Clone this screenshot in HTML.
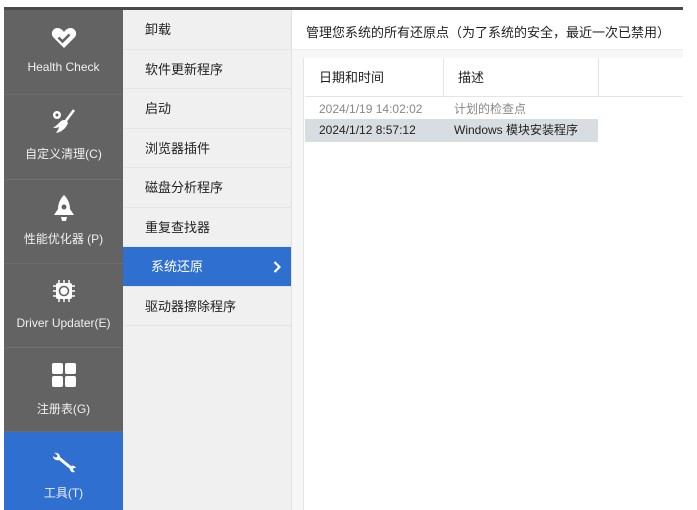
<!DOCTYPE html>
<html><head><meta charset="utf-8"><style>
*{margin:0;padding:0;box-sizing:border-box}
body{width:697px;height:510px;background:#fff;position:relative;overflow:hidden;font-family:"Liberation Sans","Noto Sans CJK SC",sans-serif}
.topbar{position:absolute;left:4px;top:7px;width:679px;height:3px;background:#4a4a4a}
.side{position:absolute;left:4px;top:10px;width:119px;height:500px;background:#636363}
.si{position:absolute;left:0;width:119px;color:#f0f0f0;font-size:12px;text-align:center;border-bottom:1px solid #6e6e6e}
.si svg{display:block;margin:0 auto}
.si .lb{position:absolute;left:0;width:119px}
.mid{position:absolute;left:123px;top:10px;width:169px;height:500px;background:#f0f0f0;border-right:1px solid #e0e0e0}
.mi{height:39.5px;border-bottom:1px solid #e6e6e6;font-size:13px;color:#222;padding-left:22px;line-height:40px}
.mi.act{background:#2f6fd0;color:#fff;position:relative;padding-left:28px}
.content{position:absolute;left:292px;top:10px;width:391px;height:500px;background:#fff}
.hd{position:absolute;left:14px;top:12px;font-size:13px;color:#222;white-space:nowrap}
.sep{position:absolute;left:0;top:39px;width:391px;height:9px;background:#f7f7f7;border-top:1px solid #ececec}
.strip{position:absolute;left:0;top:48px;width:12px;height:452px;background:#f7f7f7;border-right:1px solid #e4e4e4}
.list{position:absolute;left:13px;top:48px;width:378px;height:452px;background:#fff}
.lh{position:absolute;top:0;height:39px;border-right:1px solid #e4e4e4;border-bottom:1px solid #e4e4e4;font-size:13px;color:#222;line-height:39px;padding-left:14px}
.row{position:absolute;font-size:12px;white-space:nowrap}
</style></head><body>
<div class="topbar"></div>
<div class="side">
 <div class="si" style="top:0;height:85px">
  <svg width="26" height="22" viewBox="0 0 26 22" style="margin-top:17px"><path d="M13 21L2.5 10.5C-1 7 1.5 1 6.5 1C9.5 1 11.5 3 13 5C14.5 3 16.5 1 19.5 1C24.5 1 27 7 23.5 10.5Z" fill="#fff"/><path d="M7.5 10.5l4 4 7-7" stroke="#636363" stroke-width="2.6" fill="none"/></svg>
  <div class="lb" style="top:50px">Health Check</div></div>
 <div class="si" style="top:85px;height:85px">
  <svg width="30" height="28" viewBox="0 0 30 28" style="margin-top:13px"><circle cx="8" cy="7" r="4" fill="#fff"/><circle cx="8" cy="7" r="1.5" fill="#636363"/><path d="M25 2L16 14" stroke="#fff" stroke-width="2.5"/><path d="M12 13c3-2 6-1 7 2c-2 5-6 9-12 10c2-3 3-5 3-6c-2 1-4 1-6 1c3-2 5-4 8-7z" fill="#fff"/></svg>
  <div class="lb" style="top:50px">自定义清理(C)</div></div>
 <div class="si" style="top:170px;height:84px">
  <svg width="22" height="30" viewBox="0 0 22 30" style="margin-top:14px"><path d="M11 1C7 5 5 10 5 15L1 21h20l-4-6c0-5-2-10-6-14z" fill="#fff"/><circle cx="11" cy="13" r="2.5" fill="#636363"/><path d="M8 23h6l-1 4h-4z" fill="#fff"/></svg>
  <div class="lb" style="top:50px">性能优化器 (P)</div></div>
 <div class="si" style="top:254px;height:84px">
  <svg width="22" height="22" viewBox="0 0 22 22" style="margin-top:16px"><rect x="3" y="3" width="16" height="16" rx="2" fill="#fff"/><path d="M6 0v3M11 0v3M16 0v3M6 19v3M11 19v3M16 19v3M0 6h3M0 11h3M0 16h3M19 6h3M19 11h3M19 16h3" stroke="#fff" stroke-width="1.5"/><circle cx="11" cy="11" r="4.5" fill="none" stroke="#636363" stroke-width="1.6"/></svg>
  <div class="lb" style="top:52px">Driver Updater(E)</div></div>
 <div class="si" style="top:338px;height:84px">
  <svg width="24" height="24" viewBox="0 0 24 24" style="margin-top:15px"><rect x="0" y="0" width="11" height="11" rx="2" fill="#fff"/><rect x="13" y="0" width="11" height="11" rx="2" fill="#fff"/><rect x="0" y="13" width="11" height="11" rx="2" fill="#fff"/><rect x="13" y="13" width="11" height="11" rx="2" fill="#fff"/></svg>
  <div class="lb" style="top:52px">注册表(G)</div></div>
 <div class="si" style="top:422px;height:78px;background:#2f6fd0;border:none">
  <svg width="26" height="22" viewBox="0 0 26 22" style="margin-top:19px"><path d="M3 2c3-1 6 1 6 4l11 9c2-1 4 0 5 2c-1 0-3 0-3 1s1 2 2 3c-3 1-5-1-5-3L8 9C5 10 2 8 2 5c1 1 3 2 4 1s0-3-3-4z" fill="#fff"/></svg>
  <div class="lb" style="top:52px">工具(T)</div></div>
</div>
<div class="mid">
 <div class="mi">卸载</div>
 <div class="mi">软件更新程序</div>
 <div class="mi">启动</div>
 <div class="mi">浏览器插件</div>
 <div class="mi">磁盘分析程序</div>
 <div class="mi">重复查找器</div>
 <div class="mi act">系统还原<svg style="position:absolute;right:10px;top:14px" width="8" height="12" viewBox="0 0 8 12"><path d="M1.5 1l5 5-5 5" stroke="#fff" stroke-width="2.2" fill="none"/></svg></div>
 <div class="mi">驱动器擦除程序</div>
</div>
<div class="content">
 <div class="hd">管理您系统的所有还原点（为了系统的安全，最近一次已禁用）</div>
 <div class="sep"></div>
 <div class="strip"></div>
 <div class="list">
  <div class="lh" style="left:0;width:139px">日期和时间</div>
  <div class="lh" style="left:139px;width:155px">描述</div>
  <div class="lh" style="left:294px;width:84px;border-right:none"></div>
  <div class="row" style="left:0;top:41px;height:20px;line-height:20px;color:#888;width:293px"><span style="position:absolute;left:14px">2024/1/19 14:02:02</span><span style="position:absolute;left:149px">计划的检查点</span></div>
  <div class="row" style="left:0;top:61px;height:23px;line-height:23px;color:#222;width:293px;background:#d8dde2"><span style="position:absolute;left:14px">2024/1/12 8:57:12</span><span style="position:absolute;left:149px">Windows 模块安装程序</span></div>
 </div>
</div>
</body></html>
